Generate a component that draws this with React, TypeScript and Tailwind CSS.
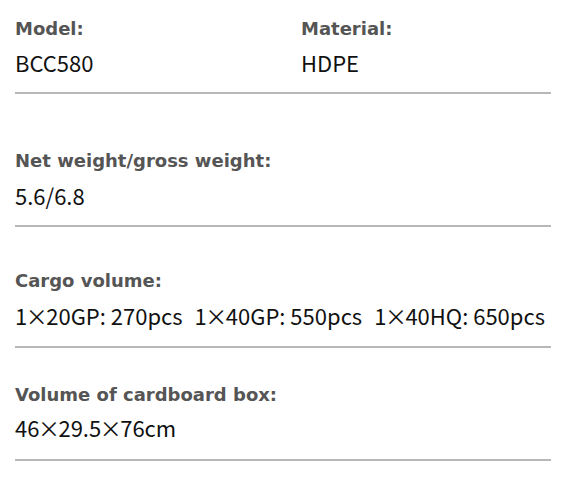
const labelFont = { fontFamily: '"DejaVu Sans", "Noto Sans", sans-serif' };
const valueFont = { fontFamily: '"Noto Sans CJK SC", "Noto Sans", sans-serif' };

// full-width × sits a little tighter in the reference
const Times = () => <span className="mx-[-1.5px]">×</span>;

const Label: React.FC<{ children: React.ReactNode }> = ({ children }) => (
  <div className="text-[18px] leading-[24px] font-bold text-[#555555]" style={labelFont}>
    {children}
  </div>
);

const Value: React.FC<{ children: React.ReactNode; className?: string }> = ({ children, className = '' }) => (
  <div className={`text-[22px] leading-[30px] text-[#111111] whitespace-nowrap ${className}`} style={valueFont}>
    {children}
  </div>
);

export default function App() {
  return (
    <div className="w-[580px] h-[483px] bg-white overflow-hidden">
      <div className="w-[536px] ml-[15px] flex flex-col">
        <div className="pt-[17px] pb-[15px] border-b-2 border-[#b8b8b8] grid grid-cols-[286px_1fr]">
          <div className="flex flex-col">
            <Label>Model:</Label>
            <Value className="mt-[6px]">BCC580</Value>
          </div>
          <div className="flex flex-col">
            <Label>Material:</Label>
            <Value className="mt-[6px]">HDPE</Value>
          </div>
        </div>

        <div className="pt-[55px] pb-[15px] border-b-2 border-[#b8b8b8] flex flex-col">
          <Label>Net weight/gross weight:</Label>
          <Value className="mt-[7px]">5.6/6.8</Value>
        </div>

        <div className="pt-[42px] pb-[16px] border-b-2 border-[#b8b8b8] flex flex-col">
          <Label>Cargo volume:</Label>
          <Value className="mt-[7px] flex gap-[12px]">
            <span>
              1<Times />20GP: 270pcs
            </span>
            <span>
              1<Times />40GP: 550pcs
            </span>
            <span>
              1<Times />40HQ: 650pcs
            </span>
          </Value>
        </div>

        <div className="pt-[35px] pb-[17px] border-b-2 border-[#b8b8b8] flex flex-col">
          <Label>Volume of cardboard box:</Label>
          <Value className="mt-[5px]">
            46<Times />29.5<Times />76cm
          </Value>
        </div>
      </div>
    </div>
  );
}
